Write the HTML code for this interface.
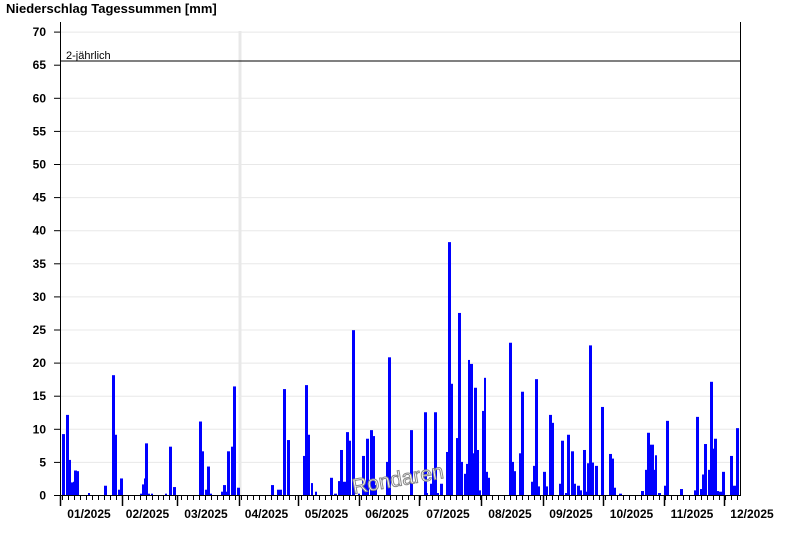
<!DOCTYPE html>
<html><head><meta charset="utf-8"><style>
html,body{margin:0;padding:0;background:#fff;width:800px;height:550px;overflow:hidden}
svg text{font-family:"Liberation Sans",Arial,sans-serif}
</style></head><body>
<svg id="s" width="800" height="550" xmlns="http://www.w3.org/2000/svg">
<text x="6" y="13" font-size="13" font-weight="bold">Niederschlag Tagessummen [mm]</text>
<g id="grid"></g>
<rect x="238.5" y="31" width="3" height="464" fill="#e8e8e8"/>
<g id="bars" fill="#0000ff"></g>
<line x1="60" y1="61" x2="740" y2="61" stroke="#000" stroke-width="1"/>
<text x="66" y="59" font-size="11">2-jährlich</text>
<line x1="60.5" y1="22" x2="60.5" y2="496" stroke="#000"/>
<line x1="740.5" y1="22" x2="740.5" y2="496" stroke="#000"/>
<line x1="60" y1="495.5" x2="741" y2="495.5" stroke="#000"/>
<g id="ax"></g>
<text x="398" y="486" font-size="21" fill="#fff" stroke="#888" stroke-width="1" transform="rotate(-10 398 480)" text-anchor="middle">Rondaren</text>
</svg>
<script>
var NS="http://www.w3.org/2000/svg";
function el(p,t,a,txt){var e=document.createElementNS(NS,t);for(var k in a)e.setAttribute(k,a[k]);if(txt)e.textContent=txt;document.getElementById(p).appendChild(e);}
function Y(v){return 495-v*6.62;}
for(var v=5;v<=70;v+=5){ if(v!=65) el("grid","line",{x1:61,x2:740,y1:Y(v)+0.5,y2:Y(v)+0.5,stroke:"#e8e8e8"}); }
for(var v=0;v<=70;v+=5){el("ax","line",{x1:54,x2:60,y1:Y(v)+0.5,y2:Y(v)+0.5,stroke:"#000"});
 el("ax","text",{x:46,y:Y(v)+4.5,"font-size":12,"font-weight":"bold","text-anchor":"end"},String(v));}
var ms=[60,122,177,239,298,359,419,481,543,603,664,724,784];
for(var i=0;i<12;i++){el("ax","line",{x1:ms[i]+0.5,x2:ms[i]+0.5,y1:495,y2:506,stroke:"#000","stroke-width":1.5});
 var lab=(i+1<10?"0":"")+(i+1)+"/2025";
 el("ax","text",{x:(ms[i]+ms[i+1])/2-2,y:518,"font-size":12,"font-weight":"bold","text-anchor":"middle"},lab);}
for(var x=62;x<740;x+=5.97){el("ax","line",{x1:Math.round(x)+0.5,x2:Math.round(x)+0.5,y1:495,y2:500,stroke:"#000"});}
var b=[[62,65,9.2],[66,69,12.1],[69,71,5.3],[71,73,1.9],[73,75,2.0],[74,77,3.7],[77,79,3.6],[88,90,0.3],[104,107,1.4],[112,115,18.1],[115,117,9.1],[118,120,0.8],[120,123,2.5],
[140,142,0.2],[142,144,1.6],[144,145,2.5],[145,148,7.8],[148,150,0.2],[151,153,0.2],[165,167,0.2],[169,172,7.3],[173,176,1.2],
[199,202,11.1],[202,204,6.6],[205,207,0.8],[207,210,4.3],[210,212,0.2],[221,223,0.5],[223,226,1.5],[226,228,0.5],[227,230,6.6],[231,233,7.3],[233,236,16.4],[237,240,1.1],
[271,274,1.5],[277,282,0.8],[283,286,16],[287,290,8.3],[303,305,5.9],[305,308,16.6],[308,310,9.1],[311,313,1.8],[315,317,0.5],[330,333,2.6],[334,337,0.2],[338,340,2.1],[340,343,6.8],[343,346,2],[346,349,9.5],[349,351,8.2],[352,355,24.9],[358,360,0.2],[362,365,5.9],[365,366,2],[366,369,8.5],[370,373,9.8],[373,375,8.9],[375,377,1.5],[386,388,5],[388,391,20.8],[410,413,9.8],
[424,427,12.5],[427,428,0.3],[430,432,1.7],[432,434,4],[434,437,12.5],[437,439,0.3],[440,443,1.7],[446,448,6.5],[448,451,38.2],[451,453,16.8],[456,458,8.6],[458,461,27.5],[461,463,5],[464,466,3.2],[466,468,4.7],[468,470,20.4],[470,473,19.8],[473,474,6.3],[474,477,16.2],[477,479,6.8],[479,481,0.7],[482,484,12.7],[484,486,17.7],[486,488,3.5],[488,490,2.6],
[509,512,23],[512,514,5],[514,516,3.6],[519,521,6.3],[521,524,15.6],[531,533,2],[533,535,4.4],[535,538,17.5],[538,540,1.3],[543,546,3.5],[546,548,1.3],[549,552,12.1],[552,554,10.9],[559,561,1.7],[561,564,8.2],[565,567,0.3],[567,570,9.1],[571,574,6.6],[574,576,1.7],[577,580,1.4],[580,582,0.7],
[583,586,6.8],[586,587,0.5],[587,589,4.8],[589,592,22.6],[592,594,4.9],[595,598,4.4],[601,604,13.3],[609,612,6.2],[612,614,5.5],[614,616,1.1],[619,622,0.2],[641,644,0.6],[645,647,3.8],[647,650,9.4],[650,654,7.6],[654,655,3.8],[655,657,6],[658,661,0.3],[664,666,1.4],[666,669,11.2],[680,683,0.9],
[694,696,0.7],[696,699,11.8],[700,702,0.9],[702,704,3.1],[704,707,7.7],[708,710,3.8],[710,713,17.1],[713,714,7],[714,717,8.5],[717,719,0.6],[719,722,0.5],[722,725,3.5],[730,733,5.9],[733,736,1.4],[736,739,10.1]];
b.forEach(function(r){var y=Y(r[2]);el("bars","rect",{x:r[0],y:y,width:r[1]-r[0],height:495-y});});
</script>
</body></html>
